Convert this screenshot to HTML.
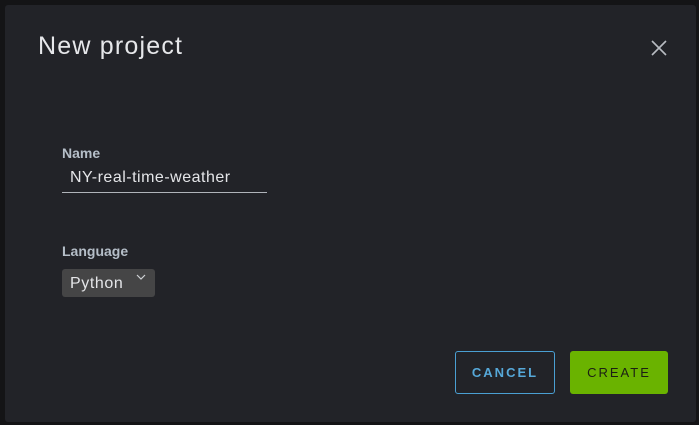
<!DOCTYPE html>
<html><head><style>
body{margin:0;width:699px;height:425px;background:#141416;font-family:"Liberation Sans",sans-serif;position:relative;overflow:hidden}
.d{position:absolute;left:5px;top:5px;width:691px;height:417px;background:#222328;border-radius:3px}
.a{position:absolute}
</style></head><body>
<div class="d"></div>
<div class="a" style="left:38px;top:32px;font-size:25px;color:#e6e7ea;letter-spacing:1.2px">New project</div>
<svg class="a" style="left:650px;top:39px" width="18" height="18"><path d="M2 2L16 16M16 2L2 16" stroke="#b8bcc2" stroke-width="1.6"/></svg>
<div class="a" style="left:62px;top:145px;font-size:14px;font-weight:bold;color:#b5bec8">Name</div>
<div class="a" style="left:70px;top:169px;font-size:16px;color:#e4e5e8;letter-spacing:0.5px">NY-real-time-weather</div>
<div class="a" style="left:62px;top:192px;width:205px;height:1px;background:#b0b4ba"></div>
<div class="a" style="left:62px;top:243px;font-size:14px;font-weight:bold;color:#b5bec8">Language</div>
<div class="a" style="left:62px;top:269px;width:93px;height:28px;background:#454546;border-radius:3px"></div>
<div class="a" style="left:70px;top:275px;font-size:16px;color:#e4e5e8;letter-spacing:0.6px">Python</div>
<svg class="a" style="left:136px;top:273px" width="10" height="8"><path d="M1 2L5 6L9 2" fill="none" stroke="#cfd2d6" stroke-width="1.2"/></svg>
<div class="a" style="left:455px;top:351px;width:98px;height:41px;border:1px solid #4a9fd3;border-radius:3px;color:#56a8d9;font-size:13px;font-weight:bold;letter-spacing:2px;text-align:center;line-height:41px">CANCEL</div>
<div class="a" style="left:570px;top:351px;width:98px;height:43px;background:#6ab300;border-radius:3px;color:#1c1f14;font-size:13px;letter-spacing:2px;text-align:center;line-height:43px">CREATE</div>
</body></html>
